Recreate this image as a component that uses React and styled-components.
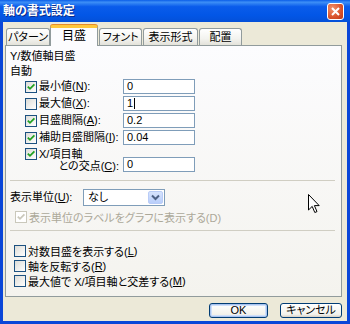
import React from 'react';
import styled, { createGlobalStyle } from 'styled-components';

const GlobalStyle = createGlobalStyle`
  html, body { margin: 0; padding: 0; }
  body {
    font-family: "Liberation Sans", "Noto Sans CJK JP", sans-serif;
    font-size: 11px;
    color: #000;
    font-feature-settings: "palt" 1;
  }
  * { box-sizing: border-box; }
`;

const Window = styled.div`
  position: relative;
  width: 350px;
  height: 324px;
  background: #0A46D8;
  display: flex;
  flex-direction: column;
  overflow: hidden;
`;

const TitleBar = styled.div`
  height: 22px;
  display: flex;
  align-items: center;
  justify-content: space-between;
  padding: 0 6px 0 3px;
  background: linear-gradient(#0A5DE8 0%, #3D8FF6 10%, #0A5CEB 30%, #0256E6 70%, #0450D8 100%);
`;

const Title = styled.span`
  color: #fff;
  font-weight: bold;
  font-size: 12px;
  line-height: 14px;
  text-shadow: 1px 1px 0 #0A2A88;
`;

const CloseBtn = styled.div`
  width: 17px;
  height: 17px;
  border: 1px solid #fff;
  border-radius: 3px;
  background: radial-gradient(circle at 30% 30%, #F0906A, #D9522B 60%, #B8381A);
  display: flex;
  align-items: center;
  justify-content: center;
`;

const Body = styled.div`
  flex: 1;
  margin: 0 3px 3px;
  background: #ECE9D8;
  padding: 3px 5px 0 2px;
  display: flex;
  flex-direction: column;
`;

const TabRow = styled.div`
  display: flex;
  align-items: flex-end;
  height: 21px;
  padding-left: 1px;
  margin-bottom: -1px;
  position: relative;
  z-index: 1;
`;

const Tab = styled.div`
  width: ${p => p.$w}px;
  margin-left: ${p => p.$ml}px;
  height: ${p => (p.$active ? 21 : 17)}px;
  margin-bottom: ${p => (p.$active ? 0 : 1)}px;
  border: 1px solid #919B9C;
  border-bottom: none;
  border-radius: 3px 3px 0 0;
  background: ${p => (p.$active ? '#FCFCFE' : 'linear-gradient(#FFFFFF, #F3F3EF 60%, #E3E2DA)')};
  border-top: ${p => (p.$active ? '3px solid #FFC83C' : '1px solid #919B9C')};
  box-shadow: ${p => (p.$active ? 'inset 0 0 0 0 #fff, 0 -1px 0 #E68B2C' : 'none')};
  display: flex;
  justify-content: center;
  align-items: ${p => (p.$active ? 'flex-start' : 'center')};
  padding-top: ${p => (p.$active ? 2 : 0)}px;
  line-height: 13px;
  font-size: ${p => (p.$active ? 12 : 11)}px;
`;

const Panel = styled.div`
  height: 252px;
  border: 1px solid #919B9C;
  background: linear-gradient(#FCFCFE, #F4F3EE);
  padding: 2px 0 0 4px;
  display: flex;
  flex-direction: column;
`;

const TextLine = styled.div`
  line-height: ${p => p.$lh || 16}px;
  height: ${p => p.$lh || 16}px;
  color: ${p => (p.$disabled ? '#ACA899' : '#000')};
`;

const FieldRow = styled.div`
  display: flex;
  align-items: flex-start;
  height: 17px;
`;

const FieldLabel = styled.div`
  width: 113px;
  height: 15px;
  line-height: 15px;
  display: flex;
  align-items: center;
  padding-left: 15px;
  white-space: nowrap;
`;

const CrossBlock = styled.div`
  display: flex;
  align-items: flex-end;
  margin-top: 1px;
`;

const CrossLabels = styled.div`
  width: 113px;
  display: flex;
  flex-direction: column;
`;

const CrossLine = styled.div`
  height: 12px;
  line-height: 12px;
  display: flex;
  align-items: center;
  padding-left: ${p => p.$indent || 0}px;
  justify-content: ${p => (p.$right ? 'flex-end' : 'flex-start')};
  padding-right: ${p => (p.$right ? 4 : 0)}px;
`;

const TextBox = styled.div`
  width: 72px;
  height: 15px;
  border: 1px solid #7F9DB9;
  background: #fff;
  padding-left: 3px;
  line-height: 13px;
  display: flex;
  align-items: center;
`;

const Caret = styled.span`
  display: inline-block;
  width: 1px;
  height: 11px;
  margin-left: 1px;
  background: #000;
`;

const Separator = styled.div`
  height: 1px;
  margin: ${p => p.$mt}px 6px 0 0;
  background: #D0CEC3;
`;

const UnitRow = styled.div`
  display: flex;
  align-items: center;
  height: 17px;
  margin-top: 8px;
`;

const UnitLabel = styled.div`
  width: 73px;
  line-height: 17px;
`;

const Select = styled.div`
  width: 82px;
  height: 17px;
  border: 1px solid #7F9DB9;
  background: #fff;
  display: flex;
  align-items: center;
  justify-content: space-between;
  padding: 1px;
`;

const SelectText = styled.span`
  padding-left: 3px;
  line-height: 13px;
`;

const DropBtn = styled.div`
  width: 15px;
  height: 13px;
  border: 1px solid #B9CCF7;
  border-radius: 2px;
  background: linear-gradient(#D6E3FD, #B9CEFA);
  display: flex;
  align-items: center;
  justify-content: center;
`;

const CheckRow = styled.div`
  display: flex;
  align-items: center;
  height: ${p => p.$h || 15}px;
  margin-top: ${p => p.$mt || 0}px;
  padding-left: ${p => p.$indent || 0}px;
  color: ${p => (p.$disabled ? '#ACA899' : '#000')};
  white-space: nowrap;
`;

const Box = styled.span`
  flex: none;
  width: 12px;
  height: 12px;
  margin-right: 2px;
  border: 1px solid ${p => (p.$disabled ? '#CAC8BB' : '#1C5180')};
  background: ${p => (p.$disabled ? '#fff' : 'linear-gradient(135deg, #DCDCD7, #FFFFFF)')};
  display: flex;
  align-items: center;
  justify-content: center;
`;

const Key = styled.u`
  text-decoration: underline;
`;

const ButtonRow = styled.div`
  display: flex;
  justify-content: flex-end;
  gap: 12px;
  margin-top: 6px;
`;

const Button = styled.div`
  width: ${p => p.$w}px;
  height: 15px;
  border: 1px solid #003C74;
  border-radius: 3px;
  background: linear-gradient(#FFFFFF, #F2F2EC 80%, #D6D0C5);
  box-shadow: ${p => (p.$default ? 'inset 0 0 0 1px #A9C4F0, inset 0 0 0 2px #CFE0FA' : 'none')};
  display: flex;
  align-items: center;
  justify-content: center;
  line-height: 13px;
`;

const Cursor = styled.svg`
  position: absolute;
  left: 308px;
  top: 194px;
`;

const Check = ({ checked, disabled }) => (
  <Box $disabled={disabled}>
    {checked && (
      <svg width="10" height="10" viewBox="0 0 10 10">
        <path d="M1.8 4.6 L4 6.8 L8.4 2.4" fill="none" stroke={disabled ? '#CAC8BB' : '#21A121'} strokeWidth="1.8" />
      </svg>
    )}
  </Box>
);

const fields = [
  { label: '最小値(', key: 'N', tail: '):', value: '0', checked: true },
  { label: '最大値(', key: 'X', tail: '):', value: '1', checked: false, caret: true },
  { label: '目盛間隔(', key: 'A', tail: '):', value: '0.2', checked: true },
  { label: '補助目盛間隔(', key: 'I', tail: '):', value: '0.04', checked: true },
];

const options = [
  { label: '対数目盛を表示する(', key: 'L' },
  { label: '軸を反転する(', key: 'R' },
  { label: '最大値で X/項目軸と交差する(', key: 'M' },
];

const tabs = [
  { name: 'パターン', w: 44, ml: 0 },
  { name: '目盛', w: 48, ml: 0, active: true },
  { name: 'フォント', w: 43, ml: 1 },
  { name: '表示形式', w: 55, ml: 1 },
  { name: '配置', w: 43, ml: 1 },
];

export default function App() {
  return (
    <>
      <GlobalStyle />
      <Window>
        <TitleBar>
          <Title>軸の書式設定</Title>
          <CloseBtn>
            <svg width="9" height="9" viewBox="0 0 9 9">
              <path d="M1 1 L8 8 M8 1 L1 8" stroke="#fff" strokeWidth="2" />
            </svg>
          </CloseBtn>
        </TitleBar>
        <Body>
          <TabRow>
            {tabs.map(t => (
              <Tab key={t.name} $w={t.w} $ml={t.ml} $active={t.active}>{t.name}</Tab>
            ))}
          </TabRow>
          <Panel>
            <TextLine>Y/数値軸目盛</TextLine>
            <TextLine $lh={15}>自動</TextLine>
            {fields.map(f => (
              <FieldRow key={f.key}>
                <FieldLabel>
                  <Check checked={f.checked} />
                  {f.label}<Key>{f.key}</Key>{f.tail}
                </FieldLabel>
                <TextBox>{f.value}{f.caret && <Caret />}</TextBox>
              </FieldRow>
            ))}
            <CrossBlock>
              <CrossLabels>
                <CrossLine $indent={15}>
                  <Check checked />
                  X/項目軸
                </CrossLine>
                <CrossLine $right>との交点(<Key>C</Key>):</CrossLine>
              </CrossLabels>
              <TextBox>0</TextBox>
            </CrossBlock>
            <Separator $mt={8} />
            <UnitRow>
              <UnitLabel>表示単位(<Key>U</Key>):</UnitLabel>
              <Select>
                <SelectText>なし</SelectText>
                <DropBtn>
                  <svg width="9" height="7" viewBox="0 0 9 7">
                    <path d="M1 1.5 L4.5 5 L8 1.5" fill="none" stroke="#4D6185" strokeWidth="2" />
                  </svg>
                </DropBtn>
              </Select>
            </UnitRow>
            <CheckRow $h={16} $mt={3} $indent={5} $disabled>
              <Check checked disabled />
              表示単位のラベルをグラフに表示する(D)
            </CheckRow>
            <Separator $mt={5} />
            {options.map((o, i) => (
              <CheckRow key={o.key} $mt={i === 0 ? 12 : 0} $indent={4}>
                <Check />
                {o.label}<Key>{o.key}</Key>)
              </CheckRow>
            ))}
          </Panel>
          <ButtonRow>
            <Button $w={59} $default>OK</Button>
            <Button $w={62}>キャンセル</Button>
          </ButtonRow>
        </Body>
        <Cursor width="12" height="20" viewBox="0 0 12 20">
          <path d="M0.5 0.5 L0.5 16 L4.2 12.4 L6.8 18.5 L9 17.6 L6.4 11.6 L11.2 11.6 Z" fill="#fff" stroke="#000" strokeWidth="1" />
        </Cursor>
      </Window>
    </>
  );
}
